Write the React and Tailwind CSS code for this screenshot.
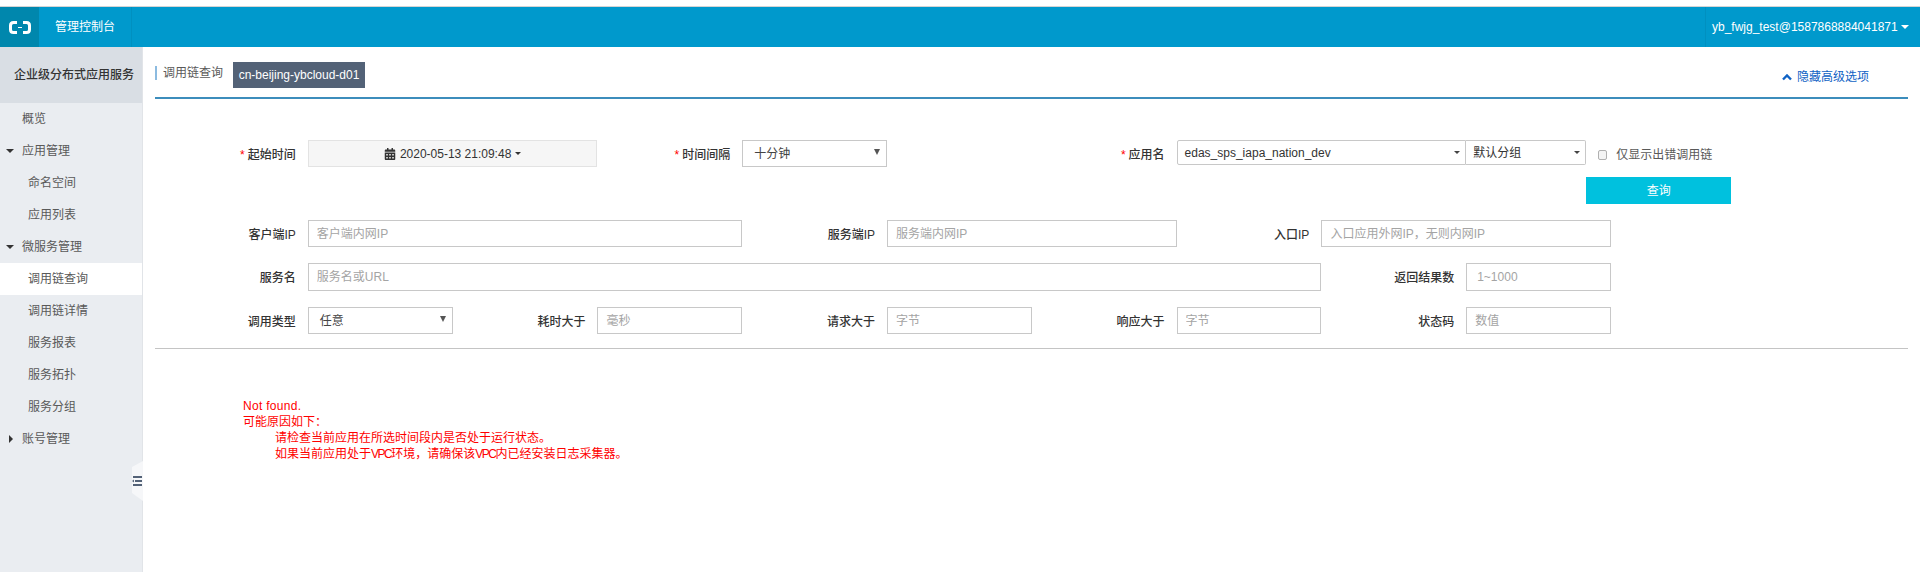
import React from 'react';
import { FaCalendarAlt } from 'react-icons/fa';

const FONT = 'font-["Liberation_Sans","Noto_Sans_CJK_SC",sans-serif]';

const navItems = [
  { label: '概览', level: 0 },
  { label: '应用管理', level: 0, arrow: 'down' },
  { label: '命名空间', level: 1 },
  { label: '应用列表', level: 1 },
  { label: '微服务管理', level: 0, arrow: 'down' },
  { label: '调用链查询', level: 1, active: true },
  { label: '调用链详情', level: 1 },
  { label: '服务报表', level: 1 },
  { label: '服务拓扑', level: 1 },
  { label: '服务分组', level: 1 },
  { label: '账号管理', level: 0, arrow: 'right' },
];

const Logo = () => (
  <svg width="22" height="13" viewBox="0 0 22 13" fill="none">
    <path d="M8 1.5H4.5Q1.5 1.5 1.5 4.5V8.5Q1.5 11.5 4.5 11.5H8" stroke="white" strokeWidth="3" />
    <path d="M14 1.5H17.5Q20.5 1.5 20.5 4.5V8.5Q20.5 11.5 17.5 11.5H14" stroke="white" strokeWidth="3" />
    <rect x="9" y="6" width="4" height="1" fill="white" />
  </svg>
);

const Caret = ({ dir }) =>
  dir === 'down' ? (
    <span className="w-0 h-0 border-x-[4px] border-x-transparent border-t-[4px] border-t-[#333]" />
  ) : (
    <span className="w-0 h-0 ml-[2px] border-y-[4px] border-y-transparent border-l-[4px] border-l-[#333]" />
  );

const SelectArrow = ({ small }) => (
  <span className={small
    ? 'block w-0 h-0 border-x-[3px] border-x-transparent border-t-[3px] border-t-[#444]'
    : 'block w-0 h-0 mb-[3px] border-x-[3px] border-x-transparent border-t-[6px] border-t-[#555]'} />
);

const Label = ({ text, required, className = '' }) => (
  <div className={`flex items-center justify-end pr-[12px] pt-[2px] text-[12px] font-medium text-[#333] ${className}`}>
    {required && <span className="text-[#f00] mr-[3px]">*</span>}
    {text}
  </div>
);

const Field = ({ placeholder, className = '', h = 'h-[27px]' }) => (
  <input
    placeholder={placeholder}
    className={`${h} w-full border border-[#c8c8c8] bg-white px-[8px] text-[12px] text-[#333] placeholder:text-[#a4a4a4] outline-none ${className}`}
  />
);

const Select = ({ text, className = '' }) => (
  <div className={`flex h-[27px] items-center justify-between border border-[#c8c8c8] bg-white pl-[11px] pr-[6px] text-[12px] text-[#444] ${className}`}>
    <span>{text}</span>
    <SelectArrow />
  </div>
);

const App = () => {
  return (
    <div className={`flex h-screen flex-col overflow-hidden bg-white ${FONT}`}>
      <div className="h-[7px] shrink-0 border-b border-[#d4d4d4] bg-white" />

      <header className="flex h-[40px] shrink-0 items-stretch bg-[#0099cc] text-white">
        <div className="flex w-[39px] items-center justify-center bg-[#0087ad]">
          <Logo />
        </div>
        <div className="flex w-[93px] items-center justify-center border-r border-[#0090c0] text-[12px]">管理控制台</div>
        <div className="ml-auto flex w-[215px] items-center gap-[3px] border-l border-[#0090c0] pl-[6px] text-[12px]">
          <span>yb_fwjg_test@1587868884041871</span>
          <span className="w-0 h-0 border-x-[4px] border-x-transparent border-t-[4px] border-t-white" />
        </div>
      </header>

      <div className="flex min-h-0 flex-1">
        <aside className="relative w-[143px] shrink-0 border-r border-[#e1e4e8] bg-[#eaedf1]">
          <div className="flex h-[56px] items-center bg-[#d9dee4] pl-[14px] text-[12px] font-medium text-[#333]">企业级分布式应用服务</div>
          {navItems.map((item) => (
            <div
              key={item.label}
              className={`flex h-[32px] items-center text-[12px] text-[#595959] ${item.active ? 'bg-white' : ''} ${item.level === 1 ? 'pl-[28px]' : 'pl-[22px]'}`}
            >
              {item.arrow && (
                <span className="-ml-[16px] mr-[8px] flex w-[8px] justify-center"><Caret dir={item.arrow} /></span>
              )}
              {item.label}
            </div>
          ))}
          <div className="absolute -right-px top-[414px] flex h-[40px] w-[11px] items-center bg-[#f6f7f9] [clip-path:polygon(0_15%,100%_0,100%_100%,0_80%)]">
            <svg width="10" height="12" viewBox="0 0 10 12">
              <rect x="1" y="1" width="9" height="2" fill="#536277" />
              <rect x="3" y="5" width="7" height="2" fill="#536277" />
              <path d="M0 6L2 4.5V7.5Z" fill="#536277" />
              <rect x="1" y="9" width="9" height="2" fill="#536277" />
            </svg>
          </div>
        </aside>

        <main className="min-w-0 flex-1 pl-[12px] pr-[12px]">
          <div className="flex h-[52px] items-start border-b-2 border-[#3c8dbc]">
            <div className="mt-[19px] flex h-[14px] items-center border-l-2 border-[#8cbbe0] pl-[6px] text-[12px] leading-none text-[#595959]">调用链查询</div>
            <div className="ml-[10px] mt-[15px] flex h-[26px] w-[132px] items-center justify-center bg-[#536277] text-[12px] text-white">cn-beijing-ybcloud-d01</div>
            <div className="ml-auto mr-[39px] mt-[23px] flex items-center gap-[5px] text-[12px] leading-[14px] text-[#0f62c4]">
              <svg width="10" height="7" viewBox="0 0 10 7" fill="none">
                <path d="M1 5.5L5 1.5L9 5.5" stroke="#0f62c4" strokeWidth="2.4" />
              </svg>
              隐藏高级选项
            </div>
          </div>

          <div className="ml-[8px] mt-[41px] grid grid-cols-[repeat(12,144.8px)] gap-y-[16px]">
            <Label text="起始时间" required />
            <div className="col-span-2 flex h-[27px] items-center justify-center gap-[4px] border border-[#e3e3e3] bg-[#f6f6f6] text-[12px] text-[#333]">
              <FaCalendarAlt className="text-[12px]" />
              <span>2020-05-13 21:09:48</span>
              <span className="w-0 h-0 border-x-[3px] border-x-transparent border-t-[3px] border-t-[#333]" />
            </div>
            <Label text="时间间隔" required />
            <Select text="十分钟" />
            <div />
            <Label text="应用名" required />
            <div className="col-span-2 flex h-[25px] items-center justify-between rounded-l-[2px] border border-[#c8c8c8] bg-white pl-[7px] pr-[5px] text-[12px] text-[#333]">
              <span>edas_sps_iapa_nation_dev</span>
              <SelectArrow small />
            </div>
            <div className="col-span-3 flex items-start">
              <div className="flex h-[25px] w-[120px] items-center justify-between rounded-r-[2px] border border-l-0 border-[#c8c8c8] bg-white pl-[7px] pr-[5px] text-[12px] text-[#333]">
                <span>默认分组</span>
                <SelectArrow small />
              </div>
              <div className="ml-[12px] flex h-[27px] items-center pt-[2px] text-[12px] text-[#595959]">
                <span className="mr-[9px] h-[10px] w-[9px] rounded-[2px] border border-[#b0b0b0] bg-[#f4f4f4]" />
                仅显示出错调用链
              </div>
            </div>

            <div className="col-span-12 col-start-1 -mt-[6px] grid grid-cols-[repeat(12,144.8px)]">
              <div className="col-start-10 col-span-3 pl-[120px]">
                <button className="block h-[27px] w-[145px] bg-[#00c1de] text-[12px] text-white">查询</button>
              </div>
            </div>

            <Label text="客户端IP" />
            <div className="col-span-3"><Field placeholder="客户端内网IP" /></div>
            <Label text="服务端IP" />
            <div className="col-span-2"><Field placeholder="服务端内网IP" /></div>
            <Label text="入口IP" />
            <div className="col-span-2"><Field placeholder="入口应用外网IP，无则内网IP" /></div>
            <div className="col-span-2" />

            <Label text="服务名" />
            <div className="col-span-7"><Field placeholder="服务名或URL" h="h-[28px]" /></div>
            <Label text="返回结果数" />
            <Field placeholder="1~1000" h="h-[28px]" className="pl-[10px]" />
            <div className="col-span-2" />

            <Label text="调用类型" />
            <Select text="任意" />
            <Label text="耗时大于" />
            <Field placeholder="毫秒" />
            <Label text="请求大于" />
            <Field placeholder="字节" />
            <Label text="响应大于" />
            <Field placeholder="字节" />
            <Label text="状态码" />
            <Field placeholder="数值" />
          </div>

          <div className="mt-[14px] h-px bg-[#c4c4c4]" />

          <div className="ml-[88px] mt-[49px] text-[12px] leading-[16px] text-[#f00]">
            <div className="tracking-[0.3px]">Not found.</div>
            <div>可能原因如下：</div>
            <div className="pl-[32px]">请检查当前应用在所选时间段内是否处于运行状态。</div>
            <div className="pl-[32px]">
              如果当前应用处于<span className="tracking-[-1.5px]">VPC</span>环境，请确保该<span className="tracking-[-1.5px]">VPC</span>内已经安装日志采集器。
            </div>
          </div>
        </main>
      </div>
    </div>
  );
};

export default App;
